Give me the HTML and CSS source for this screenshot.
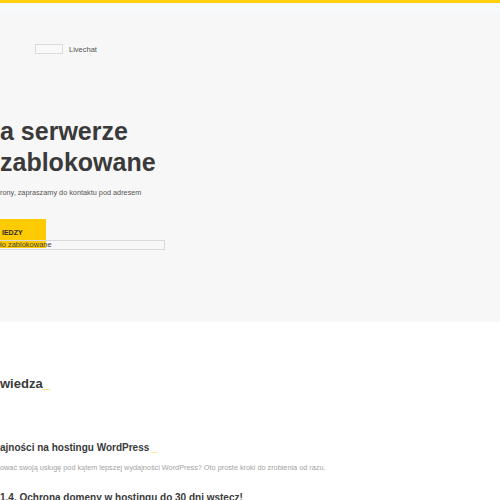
FILE: index.html
```html
<!DOCTYPE html>
<html lang="pl">
<head>
<meta charset="utf-8">
<title>Strona zablokowana</title>
<link rel="stylesheet" href="styles.css">
</head>
<body>
<div class="topbar"></div>
<section class="hero">
  <div class="hero-band"></div>
  <div class="chat-row">
    <span class="chat-logo"></span>
    <span class="chat-label">Livechat</span>
  </div>
  <h1 class="hero-title">a serwerze<br>zablokowane</h1>
  <p class="hero-text">rony, zapraszamy do kontaktu pod adresem</p>
  <div class="hero-btn">IEDZY</div>
  <div class="search-field">ło zablokowane</div>
</section>
<section class="knowledge">
  <h2 class="section-title">wiedza<span class="accent">_</span></h2>
  <h3 class="post-title">ajności na hostingu WordPress <span class="accent">_</span></h3>
  <p class="post-text">ować swoją usługę pod kątem lepszej wydajności WordPress? Oto proste kroki do zrobienia od razu.</p>
  <h3 class="post-title post-next">1.4. Ochrona domeny w hostingu do 30 dni wstecz!</h3>
</section>
</body>
</html>
```

FILE: styles.css
```css
html, body {
  margin: 0;
  padding: 0;
  background: #ffffff;
  font-family: "Liberation Sans", Arial, sans-serif;
  color: #3b3b3b;
  overflow: hidden;
}

.topbar {
  height: 3px;
  background: #fdcf0c;
}

.hero {
  height: 319px;
  background: #f7f7f7;
  overflow: hidden;
}

.hero-band {
  height: 10px;
  background: #f7f8fa;
}

.chat-row {
  display: flex;
  align-items: center;
  gap: 6px;
  margin: 31px 0 0 35px;
  height: 10px;
}

.chat-logo {
  display: block;
  width: 26px;
  height: 8px;
  border: 1px solid #dcdcdc;
  background: #f9f9f9;
}

.chat-label {
  font-size: 7.5px;
  line-height: 10px;
  color: #555555;
  padding-top: 2px;
}

.hero-title {
  margin: 62px 0 0 0;
  font-size: 25px;
  line-height: 31px;
  font-weight: 700;
  color: #3a3a3a;
}

.hero-text {
  margin: 10px 0 0 0;
  font-size: 7.3px;
  line-height: 10px;
  color: #555555;
}

.hero-btn {
  margin-top: 21px;
  width: 44px;
  height: 20.5px;
  padding: 8.5px 0 0 2px;
  background: #fdcb00;
  font-size: 7px;
  line-height: 10px;
  font-weight: 700;
  color: #2e2e2e;
}

.search-field {
  position: relative;
  margin-top: -8px;
  width: 164px;
  height: 8px;
  border: 1px solid #dadada;
  border-left: none;
  font-size: 7.5px;
  line-height: 8px;
  color: #444444;
  white-space: nowrap;
}

.knowledge {
  padding-top: 54px;
}

.section-title {
  margin: 0;
  font-size: 13px;
  line-height: 16px;
  font-weight: 700;
  color: #3a3a3a;
}

.accent {
  color: #fdcb00;
}

.post-title {
  margin: 50px 0 0 0;
  font-size: 10px;
  line-height: 12px;
  font-weight: 700;
  color: #3a3a3a;
  white-space: nowrap;
}

.post-text {
  margin: 9px 0 0 0;
  font-size: 7.3px;
  line-height: 10px;
  color: #a3a3a3;
  white-space: nowrap;
}

.post-next {
  margin-top: 19px;
}
```
